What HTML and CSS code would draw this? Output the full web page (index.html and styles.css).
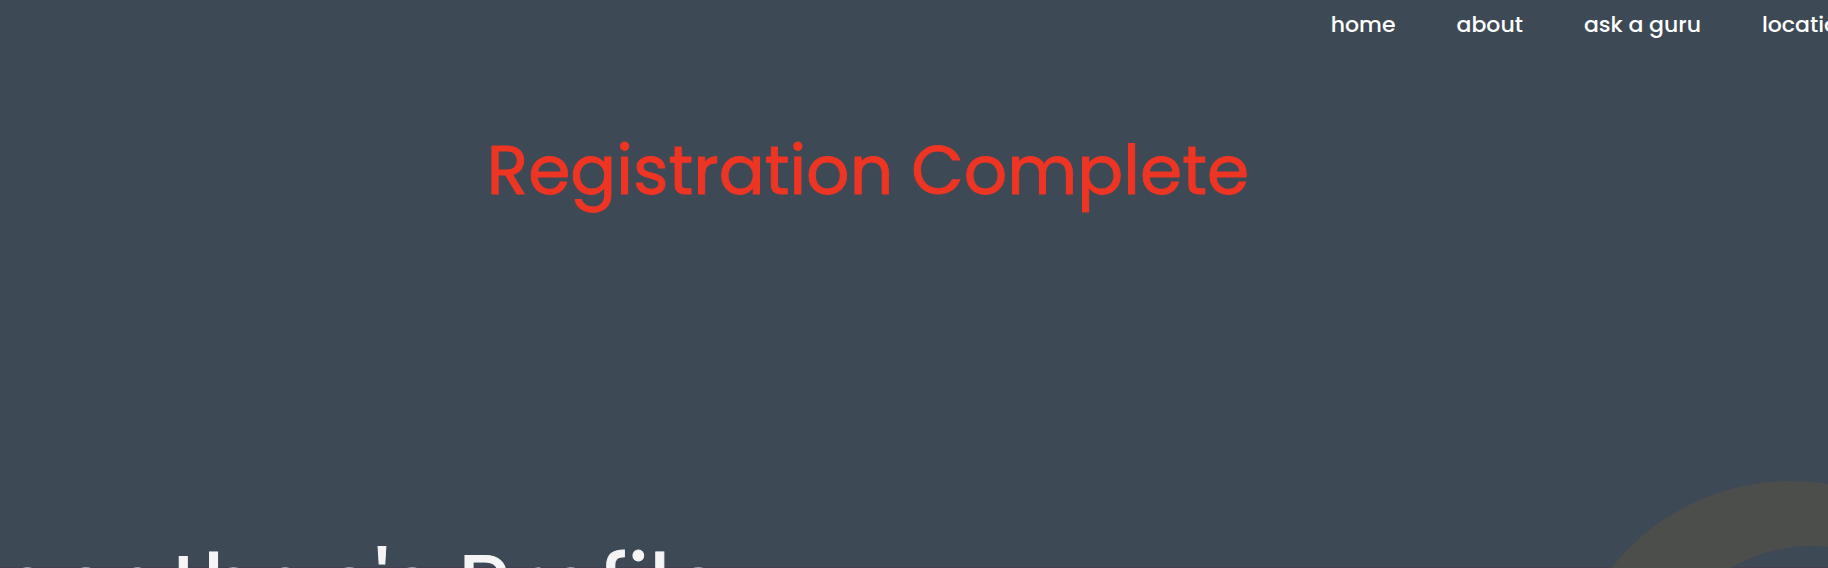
FILE: index.html
```html
<!DOCTYPE html>
<html lang="en">
<head>
<meta charset="utf-8">
<title>Registration Complete</title>
<link rel="stylesheet" href="styles.css">
</head>
<body>
<svg class="ring" viewBox="0 0 458 458" aria-hidden="true">
  <path fill-rule="evenodd" d="M229 0a229 229 0 1 0 0 458a229 229 0 1 0 0-458zM249 65a156 156 0 1 1 0 312a156 156 0 1 1 0-312z"/>
</svg>
<header class="header">
  <nav class="nav">
    <a class="nav-link" href="#">home</a>
    <a class="nav-link" href="#">about</a>
    <a class="nav-link" href="#">ask a guru</a>
    <a class="nav-link" href="#">locations</a>
  </nav>
</header>
<main class="main">
  <h1 class="notice">Registration Complete</h1>
  <h2 class="profile-title">Jonathan's Profile</h2>
</main>
</body>
</html>
```

FILE: styles.css
```css
html {
  height: 100%;
  overflow: hidden;
}

body {
  height: 100%;
  margin: 0;
  overflow: hidden;
  position: relative;
  background: #3d4954;
  box-shadow: inset 0 -1px #423f4e;
  color: #f5f5f5;
  font-family: Poppins, Inter, "Open Sans", sans-serif;
}

.ring {
  position: absolute;
  top: 481px;
  right: -192px;
  width: 458px;
  fill: #4c4e4c;
}

.header {
  padding-left: 72.8%;
}

.nav {
  display: flex;
  gap: 61px;
  padding-top: 9px;
}

.nav-link {
  color: #fff;
  font-size: 22px;
  font-weight: 500;
  line-height: 32px;
  white-space: nowrap;
  text-decoration: none;
}

.main {
  position: relative;
}

.notice {
  margin: 80px 0 0;
  padding-right: 92px;
  color: #ee3524;
  font-size: 68px;
  font-weight: 400;
  line-height: 100px;
  text-align: center;
  -webkit-text-stroke: 1px currentColor;
}

.profile-title {
  margin: 306px 0 0 -48px;
  font-size: 88px;
  font-weight: 400;
  line-height: 120px;
  white-space: nowrap;
  -webkit-text-stroke: 1px currentColor;
}
```
